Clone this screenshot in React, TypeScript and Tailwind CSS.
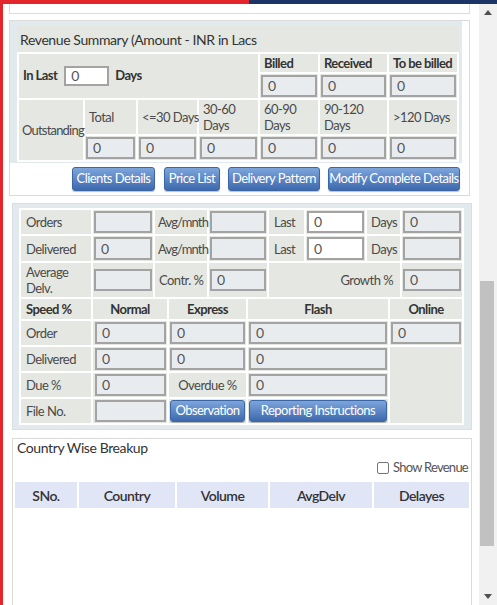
import React from "react";

function Inp({ v = "", white = false }: { v?: string; white?: boolean }) {
  return (
    <div
      className={
        white
          ? "h-full w-full border-2 border-[#a3a3a3] bg-white text-[#555] pl-[5px] flex items-center text-[14px] leading-none"
          : "h-full w-full border-2 border-[#a3a3a3] bg-[#e9ecef] text-[#555] pl-[5px] flex items-center text-[14px] leading-none"
      }
    >
      {v}
    </div>
  );
}

function Btn({ children, w }: { children: React.ReactNode; w: string }) {
  return (
    <div
      className={
        "h-full rounded-[3px] border border-[#3b67a6] bg-linear-to-b from-[#7da5dc] to-[#3e69ad] text-white text-[13px] flex items-center justify-center shadow-[0_1px_1px_rgba(0,0,0,0.25)] whitespace-nowrap " +
        w
      }
    >
      {children}
    </div>
  );
}

// base label: no padding / color / alignment defaults, so nothing conflicts
function Label({ children, cls }: { children: React.ReactNode; cls: string }) {
  return <div className={"bg-[#e5e8e2] text-[13px] leading-[16px] flex items-center " + cls}>{children}</div>;
}

const L = "text-[#4a4a4a] pl-[5px]";
const L4 = "text-[#4a4a4a] pl-[4px]";
const B4 = "text-[#333] font-bold pl-[4px]";
const BC = "text-[#333] font-bold justify-center";

function InCell({ v = "", white = false }: { v?: string; white?: boolean }) {
  return (
    <div className="bg-[#e5e8e2] p-[1px]">
      <Inp v={v} white={white} />
    </div>
  );
}

function Scrollbar() {
  return (
    <div className="w-[18px] shrink-0 bg-[#f1f1f1] flex flex-col">
      <div className="h-[17px] flex items-center justify-center">
        <svg width="8" height="5" viewBox="0 0 8 5">
          <polygon points="4,0 8,5 0,5" fill="#505050" />
        </svg>
      </div>
      <div className="h-[260px]" />
      <div className="h-[265px] w-[14px] ml-[1px] bg-[#c1c1c1]" />
      <div className="flex-1" />
      <div className="h-[17px] flex items-center justify-center">
        <svg width="8" height="5" viewBox="0 0 8 5">
          <polygon points="0,0 8,0 4,5" fill="#505050" />
        </svg>
      </div>
    </div>
  );
}

export default function App() {
  return (
    <div className="w-[497px] h-[605px] overflow-hidden bg-white flex flex-col font-['Lato',sans-serif] text-[13px] tracking-[-0.55px] text-[#333]">
      <div className="flex h-[4px] shrink-0">
        <div className="w-[249px] bg-[#e3262b]" />
        <div className="flex-1 bg-[#1c3566]" />
      </div>
      <div className="flex flex-1 min-h-0">
        <div className="w-[3px] bg-[#e3262b] shrink-0" />
        <div className="flex-1 min-w-0 overflow-hidden pl-[6px]">
          {/* stub of previous panel */}
          <div className="w-[461px] h-[10px] border-x border-b border-[#dcdcdc] bg-white" />

          {/* Revenue Summary panel */}
          <div className="w-[461px] mt-[6px] border border-[#dadada] bg-white">
            <div className="mr-[7px] bg-[#e3eaed] pt-[5px] pl-[7px] pr-[2px] pb-[1px]">
              <div className="w-[442px]">
                <div className="h-[26px] bg-[#e5e8e2] pl-[3px] flex items-center text-[14px] text-[#333]">
                  <span className="tracking-[-0.4px]">Revenue Summary (Amount - INR in Lacs</span>
                </div>
                <div className="grid grid-cols-[64px_51px_59px_59px_58px_67px_68px] grid-rows-[18px_24px_34px_24px] gap-[2px] bg-white p-[2px]">
                  <div className="col-span-4 row-span-2 bg-[#e5e8e2] flex items-center pl-[4px]">
                    <span className="font-bold text-[#333]">In Last</span>
                    <div className="ml-[7px] w-[45px] h-[20px]">
                      <Inp v="0" white />
                    </div>
                    <span className="ml-[6px] font-bold text-[#333]">Days</span>
                  </div>
                  <Label cls={B4}>Billed</Label>
                  <Label cls={B4}>Received</Label>
                  <Label cls={B4 + " whitespace-nowrap"}>To be billed</Label>
                  <InCell v="0" />
                  <InCell v="0" />
                  <InCell v="0" />

                  <Label cls="row-span-2 text-[#4a4a4a] pl-[3px] whitespace-nowrap">
                    <span className="tracking-[-0.8px]">Outstanding</span>
                  </Label>
                  <Label cls={L4}>Total</Label>
                  <Label cls={L4 + " whitespace-nowrap"}>&lt;=30 Days</Label>
                  <Label cls={L4}>30-60 Days</Label>
                  <Label cls={L4}>60-90 Days</Label>
                  <Label cls={L4}>90-120 Days</Label>
                  <Label cls={L4}>&gt;120 Days</Label>
                  <InCell v="0" />
                  <InCell v="0" />
                  <InCell v="0" />
                  <InCell v="0" />
                  <InCell v="0" />
                  <InCell v="0" />
                </div>
              </div>
            </div>
            <div className="h-[32px] pt-[4px] pb-[4px] pr-[9px] flex justify-end gap-[8px]">
              <Btn w="w-[83px]">Clients Details</Btn>
              <Btn w="w-[56px] ml-[1px]">Price List</Btn>
              <Btn w="w-[92px]">Delivery Pattern</Btn>
              <Btn w="w-[132px]">Modify Complete Details</Btn>
            </div>
          </div>

          {/* Orders panel */}
          <div className="w-[460px] ml-[3px] mt-[7px] border border-[#d8dfe2] bg-[#e3eaed] pt-[4px] pb-[4px] pl-[6px]">
            <div className="w-[445px] bg-white p-[2px]">
              <div className="grid grid-cols-[70px_60px_52px_58px_35px_59px_33px_60px] grid-rows-[24px_25px_34px] gap-[2px]">
                <Label cls={L}>Orders</Label>
                <InCell />
                <Label cls="text-[#4a4a4a] pl-[3px] whitespace-nowrap">
                  <span className="tracking-[-0.85px]">Avg/mnth</span>
                </Label>
                <InCell />
                <Label cls={L}>Last</Label>
                <InCell v="0" white />
                <Label cls={L4}>Days</Label>
                <InCell v="0" />

                <Label cls={L}>Delivered</Label>
                <InCell v="0" />
                <Label cls="text-[#4a4a4a] pl-[3px] whitespace-nowrap">
                  <span className="tracking-[-0.85px]">Avg/mnth</span>
                </Label>
                <InCell />
                <Label cls={L}>Last</Label>
                <InCell v="0" white />
                <Label cls={L4}>Days</Label>
                <InCell />

                <Label cls={L}>
                  Average
                  <br />
                  Delv.
                </Label>
                <div className="bg-[#e5e8e2] px-[1px] py-[6px]">
                  <Inp />
                </div>
                <Label cls={L4 + " whitespace-nowrap"}>Contr. %</Label>
                <div className="bg-[#e5e8e2] px-[1px] py-[6px]">
                  <Inp v="0" />
                </div>
                <Label cls="col-span-3 text-[#4a4a4a] justify-end pr-[7px]">Growth %</Label>
                <div className="bg-[#e5e8e2] px-[1px] py-[6px]">
                  <Inp v="0" />
                </div>
              </div>
              <div className="mt-[2px] grid grid-cols-[70px_74px_77px_140px_72px] grid-rows-[20px_24px_24px_24px_24px] gap-[2px]">
                <Label cls="text-[#333] font-bold pl-[5px]">Speed %</Label>
                <Label cls={BC}>Normal</Label>
                <Label cls={BC}>Express</Label>
                <Label cls={BC}>Flash</Label>
                <Label cls={BC}>Online</Label>

                <Label cls={L}>Order</Label>
                <div className="bg-[#e5e8e2] py-[1px] pl-[2px] pr-[1px]">
                  <Inp v="0" />
                </div>
                <InCell v="0" />
                <InCell v="0" />
                <InCell v="0" />

                <Label cls={L}>Delivered</Label>
                <div className="bg-[#e5e8e2] py-[1px] pl-[2px] pr-[1px]">
                  <Inp v="0" />
                </div>
                <InCell v="0" />
                <InCell v="0" />
                <div className="row-span-3 bg-[#e5e8e2]" />

                <Label cls={L}>Due %</Label>
                <div className="bg-[#e5e8e2] py-[1px] pl-[2px] pr-[1px]">
                  <Inp v="0" />
                </div>
                <Label cls="text-[#4a4a4a] justify-center">Overdue %</Label>
                <InCell v="0" />

                <Label cls={L}>File No.</Label>
                <div className="bg-[#e5e8e2] py-[1px] pl-[2px] pr-[1px]">
                  <Inp />
                </div>
                <div className="bg-[#e5e8e2] py-[1px] px-[1px]">
                  <Btn w="w-full">Observation</Btn>
                </div>
                <div className="bg-[#e5e8e2] py-[1px] px-[1px]">
                  <Btn w="w-full">Reporting Instructions</Btn>
                </div>
              </div>
            </div>
          </div>

          {/* Country Wise Breakup */}
          <div className="w-[460px] ml-[3px] mt-[8px] border border-[#dadada] bg-white h-[200px]">
            <div className="pl-[4px] text-[14px] leading-[18px] text-[#333]">
              <span className="tracking-[-0.4px]">Country Wise Breakup</span>
            </div>
            <div className="mt-[3px] flex justify-end items-center pr-[3px] h-[16px]">
              <div className="w-[12px] h-[12px] border border-[#767676] rounded-[2px] bg-white" />
              <span className="ml-[4px] text-[13px] text-[#555]">
                <span className="tracking-[-0.75px]">Show Revenue</span>
              </span>
            </div>
            <div className="mt-[6px] ml-[2px] grid grid-cols-[62px_96px_91px_102px_95px] gap-[2px] h-[26px]">
              <div className="bg-[#e1e6f7] flex items-center justify-center text-[14px] font-semibold text-[#333]">SNo.</div>
              <div className="bg-[#e1e6f7] flex items-center justify-center text-[14px] font-semibold text-[#333]">Country</div>
              <div className="bg-[#e1e6f7] flex items-center justify-center text-[14px] font-semibold text-[#333]">Volume</div>
              <div className="bg-[#e1e6f7] flex items-center justify-center text-[14px] font-semibold text-[#333]">AvgDelv</div>
              <div className="bg-[#e1e6f7] flex items-center justify-center text-[14px] font-semibold text-[#333]">Delayes</div>
            </div>
          </div>
        </div>
        <Scrollbar />
      </div>
    </div>
  );
}
